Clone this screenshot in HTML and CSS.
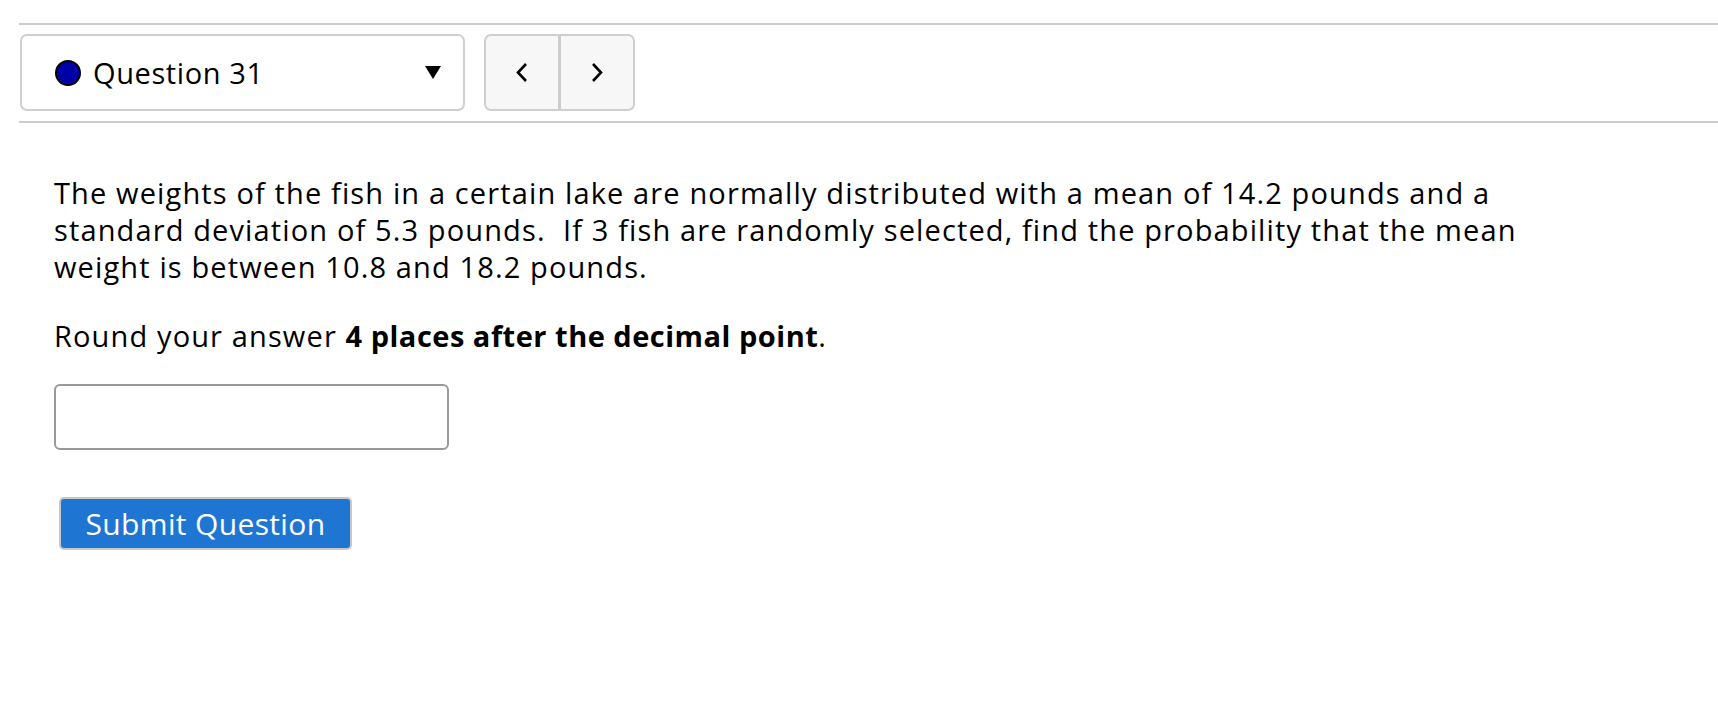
FILE: index.html
```html
<!DOCTYPE html>
<html lang="en">
<head>
<meta charset="utf-8">
<title>Question 31</title>
<link rel="stylesheet" href="styles.css">
</head>
<body>
<div class="page">
  <div class="toolbar">
    <div class="qselect">
      <span class="dot"></span>
      <span class="qlabel">Question 31</span>
      <svg class="caret" width="16" height="13" viewBox="0 0 16 13"><polygon points="0,0 16,0 8,13" fill="#000"/></svg>
    </div>
    <div class="qnav">
      <button class="navbtn" aria-label="Previous">
        <svg width="14" height="21" viewBox="0 0 14 21"><polyline points="11,2 3,10.5 11,19" fill="none" stroke="#000" stroke-width="2.6"/></svg>
      </button>
      <span class="navsep"></span>
      <button class="navbtn" aria-label="Next">
        <svg width="14" height="21" viewBox="0 0 14 21"><polyline points="3,2 11,10.5 3,19" fill="none" stroke="#000" stroke-width="2.6"/></svg>
      </button>
    </div>
  </div>
  <div class="question">
    <p class="prompt">The weights of the fish in a certain lake are normally distributed with a mean of 14.2 pounds and a standard deviation of 5.3 pounds.&nbsp; If 3 fish are randomly selected, find the probability that the mean weight is between 10.8 and 18.2 pounds.</p>
    <p class="prompt round">Round your answer <b>4 places after the decimal point</b>.</p>
    <input class="answer" type="text" aria-label="Answer">
    <div class="actions">
      <button class="submit">Submit Question</button>
    </div>
  </div>
</div>
</body>
</html>
```
FILE: styles.css
```css
html, body {
  margin: 0;
  padding: 0;
  background: #fff;
}
body {
  font-family: "Open Sans", Lato, sans-serif;
  color: #000;
}
.page {
  padding-top: 23px;
  padding-left: 19px;
}
.toolbar {
  display: flex;
  align-items: center;
  gap: 19px;
  border-top: 2px solid #cccccc;
  border-bottom: 2px solid #cccccc;
  padding: 9px 0 10px 1px;
}
.qselect {
  box-sizing: border-box;
  width: 445px;
  height: 77px;
  border: 2px solid #cfcfcf;
  border-radius: 7px;
  display: flex;
  align-items: center;
  padding: 0 22px 0 33px;
}
.dot {
  box-sizing: border-box;
  width: 26px;
  height: 26px;
  border-radius: 50%;
  background: #0000a8;
  border: 2.5px solid #000;
  flex: none;
}
.qlabel {
  font-size: 29px;
  letter-spacing: 0.6px;
  margin-left: 12px;
  flex: 1;
  font-variant-ligatures: none;
}
.caret {
  display: block;
  flex: none;
}
.qnav {
  box-sizing: border-box;
  height: 77px;
  width: 151px;
  display: flex;
  border: 2px solid #cfcfcf;
  border-radius: 7px;
  background: #f7f7f7;
  overflow: hidden;
}
.navbtn {
  flex: 1;
  border: 0;
  background: transparent;
  padding: 0;
  display: flex;
  align-items: center;
  justify-content: center;
}
.navbtn svg {
  display: block;
}
.navsep {
  width: 3px;
  background: #cccccc;
  flex: none;
}
.question {
  padding: 51px 0 0 35px;
}
.prompt {
  margin: 0;
  font-size: 29px;
  letter-spacing: 1.13px;
  line-height: 37px;
  max-width: 1500px;
  font-variant-ligatures: none;
}
.prompt b {
  font-weight: 700;
  letter-spacing: 0.5px;
}
.round {
  margin-top: 32px;
}
.answer {
  display: block;
  box-sizing: border-box;
  margin-top: 30px;
  width: 395px;
  height: 66px;
  border: 2px solid #999999;
  border-radius: 6px;
  background: #fff;
  font-size: 28px;
  padding: 0 10px;
}
.actions {
  padding: 47px 0 0 5px;
}
.submit {
  box-sizing: border-box;
  width: 293px;
  height: 53px;
  background: #1f75d2;
  color: #fff;
  border: 2px solid #c8c8c8;
  border-radius: 5px;
  font-family: "Open Sans", Lato, sans-serif;
  font-size: 30px;
  letter-spacing: 0.35px;
  padding: 0;
}
```
